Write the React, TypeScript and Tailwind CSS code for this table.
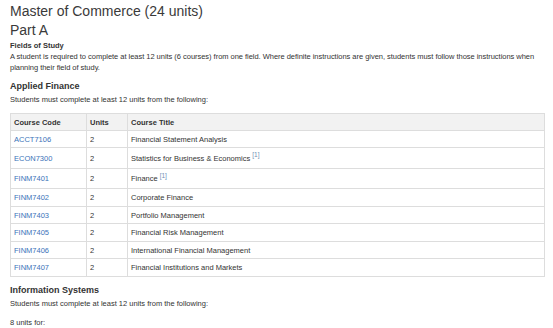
const rows: { code: string; units: string; title: string; note?: boolean; h: string }[] = [
  { code: "ACCT7106", units: "2", title: "Financial Statement Analysis", h: "h-[17px]" },
  { code: "ECON7300", units: "2", title: "Statistics for Business & Economics", note: true, h: "h-[21px]" },
  { code: "FINM7401", units: "2", title: "Finance", note: true, h: "h-[20px]" },
  { code: "FINM7402", units: "2", title: "Corporate Finance", h: "h-[18px]" },
  { code: "FINM7403", units: "2", title: "Portfolio Management", h: "h-[17px]" },
  { code: "FINM7405", units: "2", title: "Financial Risk Management", h: "h-[18px]" },
  { code: "FINM7406", units: "2", title: "International Financial Management", h: "h-[17px]" },
  { code: "FINM7407", units: "2", title: "Financial Institutions and Markets", h: "h-[18px]" },
];

export default function App() {
  return (
    <div className="h-[328px] w-[553px] overflow-hidden bg-white pl-[10px] pt-[2px] font-['Liberation_Sans',Arial,sans-serif] text-[7.5px] leading-[11px] text-[#333]">
      <h1 className="text-[14px] leading-[19px] text-[#3a3a3a]">Master of Commerce (24 units)</h1>
      <h2 className="text-[14px] leading-[19px] text-[#3a3a3a]">Part A</h2>
      <h4 className="font-bold">Fields of Study</h4>
      <p className="tracking-[-0.03px]">
        A student is required to complete at least 12 units (6 courses) from one field. Where definite instructions are given, students must follow those instructions when planning their field of study.
      </p>

      <h3 className="mt-[7px] text-[9px] font-bold leading-[12px]">Applied Finance</h3>
      <p className="mt-[2px]">Students must complete at least 12 units from the following:</p>

      <table className="mt-[8px] w-[535px] border-collapse border border-[#d9d9d9]">
        <thead>
          <tr className="h-[17px] bg-[#f2f2f2]">
            <th className="w-[76px] border border-[#dddddd] px-[3px] text-left font-bold">Course Code</th>
            <th className="w-[41px] border border-[#dddddd] px-[3px] text-left font-bold">Units</th>
            <th className="border border-[#dddddd] px-[3px] text-left font-bold">Course Title</th>
          </tr>
        </thead>
        <tbody>
          {rows.map((r) => (
            <tr key={r.code} className={r.h}>
              <td className="border border-[#dddddd] px-[3px] text-[#3b73b9]">{r.code}</td>
              <td className="border border-[#dddddd] px-[3px]">{r.units}</td>
              <td className="border border-[#dddddd] px-[3px]">
                {r.title}
                {r.note && <sup className="ml-[2px] text-[6.5px] text-[#6f8fb5]">[1]</sup>}
              </td>
            </tr>
          ))}
        </tbody>
      </table>

      <h3 className="mt-[7px] text-[9px] font-bold leading-[12px]">Information Systems</h3>
      <p className="mt-[2px]">Students must complete at least 12 units from the following:</p>
      <p className="mt-[8px]">8 units for:</p>
    </div>
  );
}
